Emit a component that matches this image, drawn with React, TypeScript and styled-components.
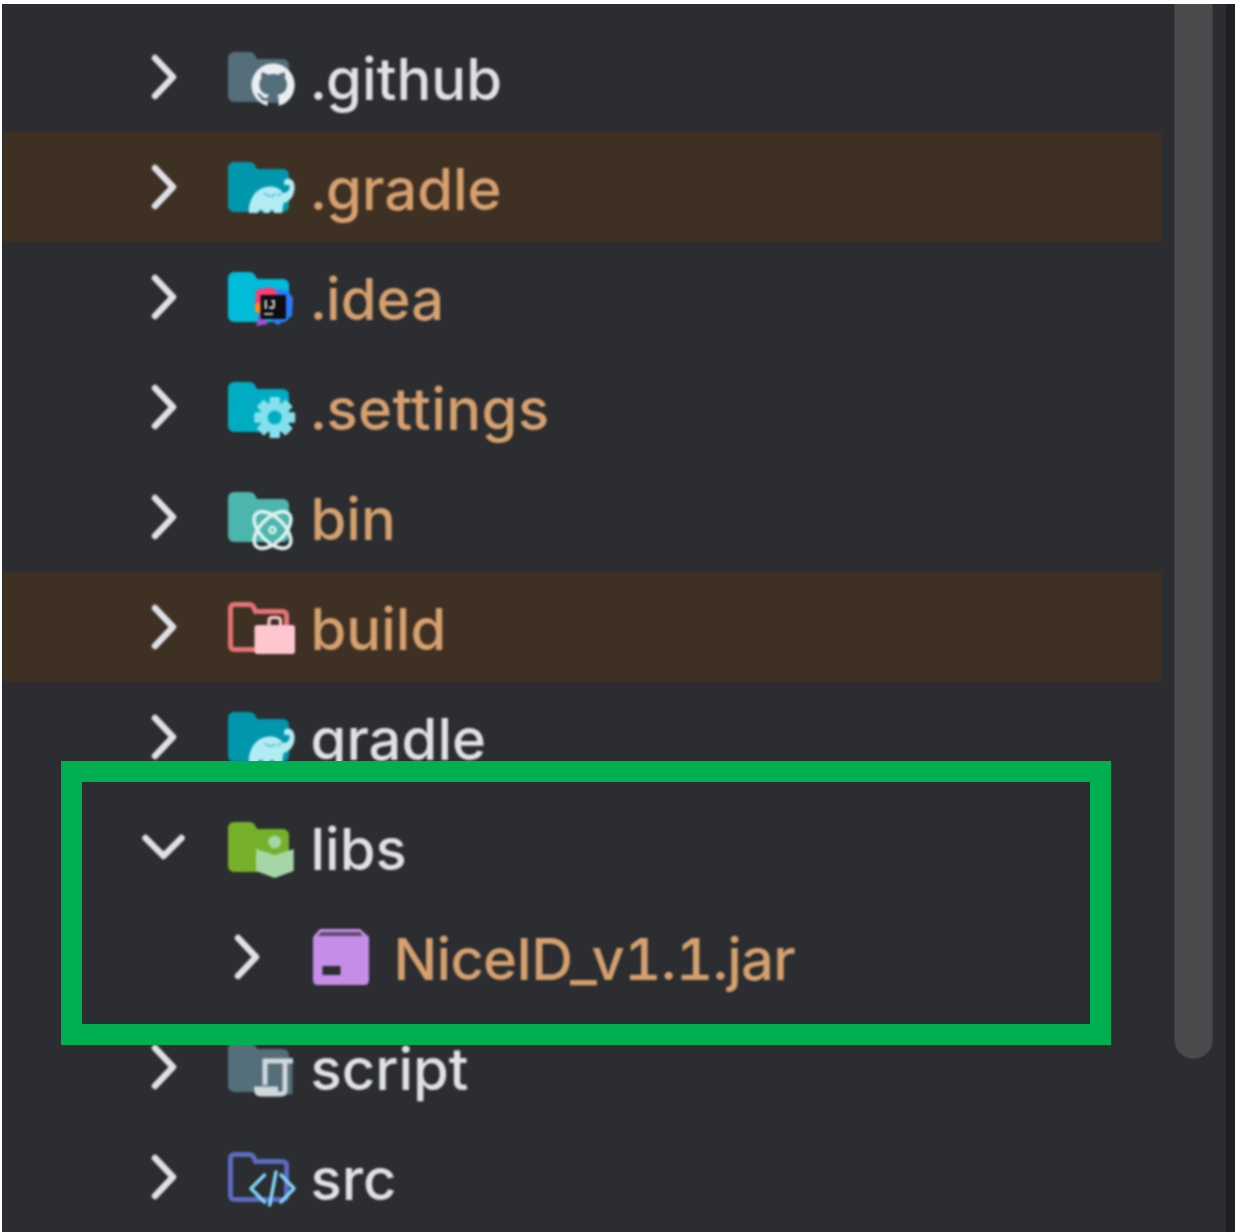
import React from "react";
import styled, { createGlobalStyle } from "styled-components";

const Global = createGlobalStyle`
  html, body { margin: 0; padding: 0; background: #ffffff; }
  #root { width: 1237px; height: 1232px; overflow: hidden; }
`;

const Page = styled.div`
  position: relative;
  box-sizing: border-box;
  width: 1237px;
  height: 1232px;
  padding: 4px 2px 0 2px;
  background: #ffffff;
`;

const Frame = styled.div`
  display: flex;
  height: 1228px;
  background: #2b2d30;
  overflow: hidden;
`;

const Tree = styled.div`
  flex: 0 0 1160px;
  padding-top: 18px;
  filter: blur(0.85px);
`;

const Row = styled.div<{ $highlight?: boolean; $indent?: number }>`
  display: flex;
  align-items: center;
  box-sizing: border-box;
  height: 110px;
  padding-left: ${(p) => 138 + (p.$indent ?? 0)}px;
  background: ${(p) => (p.$highlight ? "#3f3024" : "transparent")};
`;

const Arrow = styled.svg`
  flex: 0 0 50px;
  width: 50px;
  height: 50px;
  margin-right: 38px;
`;

const IconSlot = styled.svg`
  flex: 0 0 70px;
  width: 70px;
  height: 60px;
  margin-top: 10px;
  overflow: visible;
`;

const Label = styled.span<{ $tone: "plain" | "ignored"; $tracking?: number }>`
  margin-left: 12.5px;
  margin-top: 4px;
  font-family: Inter, "Liberation Sans", sans-serif;
  font-size: 58px;
  font-weight: 450;
  font-variant-numeric: tabular-nums;
  line-height: 110px;
  letter-spacing: ${(p) => p.$tracking ?? 0}px;
  white-space: nowrap;
  color: ${(p) => (p.$tone === "ignored" ? "#d5a06e" : "#dfe1e5")};
`;

const ScrollTrack = styled.div`
  flex: 1 1 auto;
  display: flex;
  justify-content: space-between;
`;

const ScrollThumb = styled.div`
  width: 37px;
  height: 1054px;
  margin-left: 13px;
  background: #4a4b4d;
  border-radius: 0 0 18px 18px;
  box-shadow: 0 0 0 1px #3d3e40;
`;

const EdgeStrip = styled.div`
  width: 9px;
  background: #1e1f22;
`;

const Callout = styled.div`
  position: absolute;
  left: 61px;
  top: 761px;
  width: 1050px;
  height: 284px;
  box-sizing: border-box;
  border: 21px solid #00b050;
  pointer-events: none;
`;

const Chevron = ({ open }: { open?: boolean }) => (
  <Arrow viewBox="0 0 50 50" fill="none">
    <path
      d={open ? "M5.5 16 L23.5 34 L41.5 16" : "M15 6 L33 25 L15 44"}
      stroke="#dfe1e5"
      strokeWidth="6.5"
      strokeLinecap="round"
      strokeLinejoin="round"
    />
  </Arrow>
);

const folderPath =
  "M6 0H21Q25 0 27 3L29 7H55A6 6 0 0 1 61 13V44A6 6 0 0 1 55 50H6A6 6 0 0 1 0 44V6A6 6 0 0 1 6 0Z";
const outlinedPath =
  "M6 2.5H21Q24 2.5 25.5 5L27.5 9.5H55A3.5 3.5 0 0 1 58.5 13V44A3.5 3.5 0 0 1 55 47.5H6A3.5 3.5 0 0 1 2.5 44V6A3.5 3.5 0 0 1 6 2.5Z";

const Folder = ({ color }: { color: string }) => <path d={folderPath} fill={color} />;
const OutlineFolder = ({ color }: { color: string }) => (
  <path d={outlinedPath} fill="none" stroke={color} strokeWidth="5" />
);

const GithubIcon = () => (
  <IconSlot viewBox="0 0 70 60">
    <Folder color="#546e7a" />
    <circle cx="45" cy="33" r="18" fill="#546e7a" />
    <g transform="translate(23.5 11.5) scale(2.7)">
      <path
        fill="#e9eef1"
        d="M8 0C3.58 0 0 3.58 0 8c0 3.54 2.29 6.53 5.47 7.59.4.07.55-.17.55-.38 0-.19-.01-.82-.01-1.49-2.01.37-2.53-.49-2.69-.94-.09-.23-.48-.94-.82-1.13-.28-.15-.68-.52-.01-.53.63-.01 1.08.58 1.23.82.72 1.21 1.87.87 2.33.66.07-.52.28-.87.51-1.07-1.78-.2-3.64-.89-3.64-3.95 0-.87.31-1.59.82-2.15-.08-.2-.36-1.02.08-2.12 0 0 .67-.21 2.2.82.64-.18 1.32-.27 2-.27.68 0 1.36.09 2 .27 1.53-1.04 2.2-.82 2.2-.82.44 1.1.16 1.92.08 2.12.51.56.82 1.27.82 2.15 0 3.07-1.87 3.75-3.65 3.95.29.25.54.73.54 1.48 0 1.07-.01 1.93-.01 2.2 0 .21.15.46.55.38A8.013 8.013 0 0 0 16 8c0-4.42-3.58-8-8-8z"
      />
    </g>
  </IconSlot>
);

const GradleIcon = () => (
  <IconSlot viewBox="0 0 70 60">
    <Folder color="#0097ad" />
    <path
      fill="#b2ebf2"
      d="M21 51C20 40 26 27 38 25C46 23.5 52 26 55 31C59 31 61.5 28 61.5 25C61.5 22.5 59 22 57.5 23.5C55 22 55.5 16.5 60 16.5C65 16.5 67.5 22 66.5 28C65.5 35 61 40 55.5 41L54 51H46C46 46.5 42 46.5 41.5 51H35.5C35.5 46.5 30.5 46.5 30 51Z"
    />
    <path fill="none" stroke="#6cc6d6" strokeWidth="1.8" d="M36 31Q42 37 48 32M53 31L50 34" />
  </IconSlot>
);

const IdeaIcon = () => (
  <IconSlot viewBox="0 0 70 60">
    <Folder color="#00bcd9" />
    <path fill="#ff3b6f" d="M28 18L42 15L56 22L40 42L27 36Z" />
    <path fill="#ff8a1f" d="M27 32L33 30L33 42L27 40Z" />
    <path fill="#a04fd0" d="M33 38L40 52L28 54Z" />
    <path fill="#2a7bff" d="M50 17L60 19L65 26L64 44L50 53L42 48Z" />
    <rect x="32.5" y="23" width="25.5" height="24" fill="#0c0d10" />
    <text x="36" y="36.5" fontFamily="Liberation Sans, sans-serif" fontWeight="700" fontSize="12" letterSpacing="1.5" fill="#f2f2f2">
      IJ
    </text>
    <rect x="36" y="41" width="9" height="2" fill="#c8c8c8" />
  </IconSlot>
);

const SettingsIcon = () => (
  <IconSlot viewBox="0 0 70 60">
    <Folder color="#00acc1" />
    <g fill="#85e0ec">
      {[0, 45, 90, 135].map((a) => (
        <rect key={a} x="41.5" y="15" width="10.5" height="41" rx="1.5" transform={`rotate(${a} 46.7 35.5)`} />
      ))}
      <circle cx="46.7" cy="35.5" r="15" />
    </g>
    <circle cx="46.7" cy="35.5" r="7" fill="#00acc1" />
  </IconSlot>
);

const BinIcon = () => (
  <IconSlot viewBox="0 0 70 60">
    <Folder color="#4db6ac" />
    <g fill="none" stroke="#e0f2f1" strokeWidth="3.6">
      <ellipse cx="44.5" cy="38" rx="23" ry="12" transform="rotate(45 44.5 38)" />
      <ellipse cx="44.5" cy="38" rx="23" ry="12" transform="rotate(-45 44.5 38)" />
      <circle cx="44.5" cy="38" r="3" strokeWidth="2.5" />
    </g>
  </IconSlot>
);

const BuildIcon = () => (
  <IconSlot viewBox="0 0 70 60">
    <OutlineFolder color="#e57373" />
    <path fill="none" stroke="#ffcdd2" strokeWidth="3" d="M41 24V19Q41 15.5 44.5 15.5H49Q52.5 15.5 52.5 19V24" />
    <rect x="26.5" y="23" width="40.5" height="29" rx="3" fill="#ffc6d0" />
  </IconSlot>
);

const LibsIcon = () => (
  <IconSlot viewBox="0 0 70 60">
    <Folder color="#76b02a" />
    <circle cx="46.7" cy="20" r="6.5" fill="#a5d6a7" />
    <path fill="#a5d6a7" d="M28 27L46.7 33L65.7 27V49L46.7 56L28 49Z" />
  </IconSlot>
);

const ScriptIcon = () => (
  <IconSlot viewBox="0 0 70 60">
    <Folder color="#546e7a" />
    <path fill="#546e7a" stroke="#546e7a" strokeWidth="5" d="M33 18H62V50H30Z" />
    <path
      fill="none"
      stroke="#cfd8dc"
      strokeWidth="5"
      d="M65 19H37V43M57 19V48Q57 52 53 52H33Q28.5 52 28.5 47H50"
    />
  </IconSlot>
);

const SrcIcon = () => (
  <IconSlot viewBox="0 0 70 60">
    <OutlineFolder color="#5c6bc0" />
    <path
      fill="none"
      stroke="#81d4fa"
      strokeWidth="3.6"
      strokeLinecap="round"
      strokeLinejoin="round"
      d="M36.5 23L23 36.5L36.5 50M48 20L41.7 53M53 23L66 36.5L53 50"
    />
  </IconSlot>
);

const JarIcon = () => (
  <IconSlot viewBox="0 0 70 60">
    <path fill="#c68de8" d="M9 -3H49L58 5V48Q58 53 53 53H7Q2 53 2 48V5Z" />
    <path fill="#5f4a6e" d="M10 0H49L52 4H7Z" />
    <rect x="11.5" y="34" width="18" height="9" fill="#2b2d30" />
  </IconSlot>
);

type Entry = {
  name: string;
  icon: React.ReactNode;
  tone: "plain" | "ignored";
  highlight?: boolean;
  open?: boolean;
  indent?: number;
  tracking?: number;
};

const entries: Entry[] = [
  { name: ".github", icon: <GithubIcon />, tone: "plain" },
  { name: ".gradle", icon: <GradleIcon />, tone: "ignored", highlight: true },
  { name: ".idea", icon: <IdeaIcon />, tone: "ignored" },
  { name: ".settings", icon: <SettingsIcon />, tone: "ignored", tracking: 0.4 },
  { name: "bin", icon: <BinIcon />, tone: "ignored" },
  { name: "build", icon: <BuildIcon />, tone: "ignored", highlight: true },
  { name: "gradle", icon: <GradleIcon />, tone: "plain" },
  { name: "libs", icon: <LibsIcon />, tone: "plain", open: true },
  { name: "NiceID_v1.1.jar", icon: <JarIcon />, tone: "ignored", indent: 83, tracking: -0.8 },
  { name: "script", icon: <ScriptIcon />, tone: "plain" },
  { name: "src", icon: <SrcIcon />, tone: "plain" },
];

export default function App() {
  return (
    <Page>
      <Global />
      <Frame>
        <Tree>
          {entries.map((e) => (
            <Row key={e.name} $highlight={e.highlight} $indent={e.indent}>
              <Chevron open={e.open} />
              {e.icon}
              <Label $tone={e.tone} $tracking={e.tracking}>{e.name}</Label>
            </Row>
          ))}
        </Tree>
        <ScrollTrack>
          <ScrollThumb />
          <EdgeStrip />
        </ScrollTrack>
      </Frame>
      <Callout />
    </Page>
  );
}
